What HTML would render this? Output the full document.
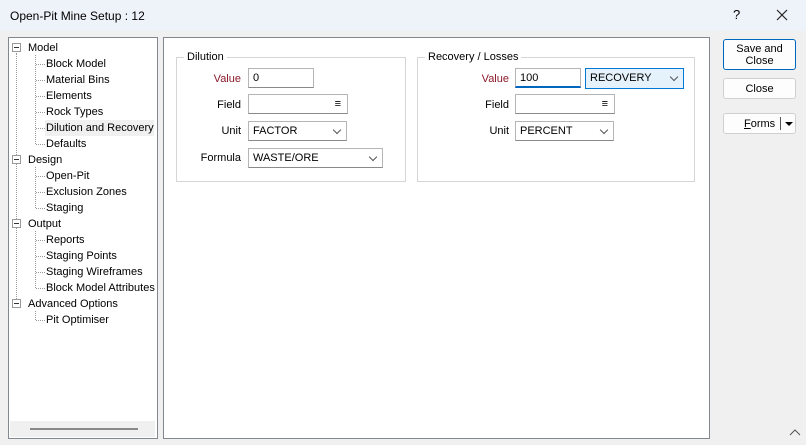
<!DOCTYPE html>
<html><head><style>
*{margin:0;padding:0;box-sizing:border-box}
body{width:806px;height:445px;background:#f0f0f0;font-family:"Liberation Sans",sans-serif;font-size:11px;color:#000;position:relative;overflow:hidden}
.a{position:absolute}
.t{position:absolute;white-space:nowrap;line-height:14px}
.box{position:absolute;background:#fff;border:1px solid #828790}
.inp{position:absolute;background:#fff;border:1px solid #b5b5b5;border-bottom-color:#8a8a8a;padding-left:4px;line-height:19px}
.chev{position:absolute;right:6px;top:5px;width:6px;height:6px;border-right:1px solid #555;border-bottom:1px solid #555;transform:rotate(45deg)}
.lbl{position:absolute;text-align:right;width:80px;line-height:14px}
.grp{position:absolute;border:1px solid #d5d5d5}
.leg{position:absolute;background:#fff;padding:0 3px;line-height:13px}
.btn{position:absolute;background:#fdfdfd;border:1px solid #d0d0d0;border-radius:3px;text-align:center;line-height:12px}
.pm{position:absolute;width:9px;height:9px;border:1px solid #999;background:#fff}
.pm:after{content:"";position:absolute;left:1px;top:3px;width:5px;height:1px;background:#333}
.dv{position:absolute;border-left:1px dotted #999}
.dh{position:absolute;border-top:1px dotted #999;width:9px}
</style></head><body>
<div class="a" style="left:0;top:0;width:806px;height:31px;background:#eef2f9"></div>
<div class="t" style="left:10px;top:9px;font-size:12px">Open-Pit Mine Setup : 12</div>
<div class="t" style="left:733px;top:8px;font-size:13px">?</div>
<svg class="a" style="left:776px;top:9px" width="12" height="12"><path d="M1 1L11 11M11 1L1 11" stroke="#222" stroke-width="1.2"/></svg>

<div class="box" style="left:8px;top:37px;width:150px;height:402px"></div>
<div class="a" style="left:10px;top:421px;width:145px;height:16px;background:#f0f0f0"></div>
<div class="a" style="left:30px;top:428px;width:108px;height:2px;background:#888"></div>

<div class="dv" style="left:16px;top:53px;height:252px"></div>
<div class="dv" style="left:35px;top:55px;height:89px"></div>
<div class="dv" style="left:35px;top:167px;height:41px"></div>
<div class="dv" style="left:35px;top:231px;height:57px"></div>
<div class="dv" style="left:35px;top:311px;height:9px"></div>

<div class="pm" style="left:12px;top:43px"></div><div class="t" style="left:28px;top:41px">Model</div>
<div class="dh" style="left:36px;top:64px"></div><div class="t" style="left:46px;top:57px">Block Model</div>
<div class="dh" style="left:36px;top:80px"></div><div class="t" style="left:46px;top:73px">Material Bins</div>
<div class="dh" style="left:36px;top:96px"></div><div class="t" style="left:46px;top:89px">Elements</div>
<div class="dh" style="left:36px;top:112px"></div><div class="t" style="left:46px;top:105px">Rock Types</div>
<div class="a" style="left:45px;top:120px;width:109px;height:16px;background:#f0f0f0"></div>
<div class="dh" style="left:36px;top:128px"></div><div class="t" style="left:46px;top:121px">Dilution and Recovery</div>
<div class="dh" style="left:36px;top:144px"></div><div class="t" style="left:46px;top:137px">Defaults</div>
<div class="pm" style="left:12px;top:155px"></div><div class="t" style="left:28px;top:153px">Design</div>
<div class="dh" style="left:36px;top:176px"></div><div class="t" style="left:46px;top:169px">Open-Pit</div>
<div class="dh" style="left:36px;top:192px"></div><div class="t" style="left:46px;top:185px">Exclusion Zones</div>
<div class="dh" style="left:36px;top:208px"></div><div class="t" style="left:46px;top:201px">Staging</div>
<div class="pm" style="left:12px;top:219px"></div><div class="t" style="left:28px;top:217px">Output</div>
<div class="dh" style="left:36px;top:240px"></div><div class="t" style="left:46px;top:233px">Reports</div>
<div class="dh" style="left:36px;top:256px"></div><div class="t" style="left:46px;top:249px">Staging Points</div>
<div class="dh" style="left:36px;top:272px"></div><div class="t" style="left:46px;top:265px">Staging Wireframes</div>
<div class="dh" style="left:36px;top:288px"></div><div class="t" style="left:46px;top:281px">Block Model Attributes</div>
<div class="pm" style="left:12px;top:299px"></div><div class="t" style="left:28px;top:297px">Advanced Options</div>
<div class="dh" style="left:36px;top:320px"></div><div class="t" style="left:46px;top:313px">Pit Optimiser</div>

<div class="box" style="left:163px;top:37px;width:547px;height:402px"></div>

<div class="grp" style="left:176px;top:57px;width:230px;height:125px"></div>
<div class="leg" style="left:184px;top:51px">Dilution</div>
<div class="lbl" style="left:161px;top:72px;color:#8b1a2b">Value</div>
<div class="inp" style="left:248px;top:68px;width:66px;height:20px">0</div>
<div class="lbl" style="left:161px;top:98px">Field</div>
<div class="inp" style="left:248px;top:94px;width:100px;height:20px"><span class="a" style="right:6px;top:0">≡</span></div>
<div class="lbl" style="left:161px;top:124px">Unit</div>
<div class="inp" style="left:248px;top:121px;width:99px;height:20px">FACTOR<span class="chev"></span></div>
<div class="lbl" style="left:161px;top:151px">Formula</div>
<div class="inp" style="left:248px;top:148px;width:135px;height:20px">WASTE/ORE<span class="chev"></span></div>

<div class="grp" style="left:417px;top:57px;width:278px;height:125px"></div>
<div class="leg" style="left:425px;top:51px">Recovery / Losses</div>
<div class="lbl" style="left:429px;top:72px;color:#8b1a2b">Value</div>
<div class="inp" style="left:515px;top:68px;width:66px;height:20px;border-bottom:2px solid #0067c0;line-height:18px">100</div>
<div class="inp" style="left:585px;top:68px;width:99px;height:21px;background:#e5f1fb;border-color:#0078d4">RECOVERY<span class="chev"></span></div>
<div class="lbl" style="left:429px;top:98px">Field</div>
<div class="inp" style="left:515px;top:94px;width:100px;height:20px"><span class="a" style="right:6px;top:0">≡</span></div>
<div class="lbl" style="left:429px;top:124px">Unit</div>
<div class="inp" style="left:515px;top:121px;width:99px;height:20px">PERCENT<span class="chev"></span></div>

<div class="btn" style="left:723px;top:39px;width:73px;height:31px;border:1px solid #0067c0;padding-top:3px">Save and<br>Close</div>
<div class="btn" style="left:723px;top:78px;width:73px;height:21px;line-height:20px">Close</div>
<div class="btn" style="left:723px;top:113px;width:73px;height:21px;line-height:20px"><span style="position:absolute;left:20px"><u>F</u>orms</span><span class="a" style="left:56px;top:3px;height:13px;border-left:1px solid #555"></span><span class="a" style="left:61px;top:8px;border-left:4px solid transparent;border-right:4px solid transparent;border-top:4px solid #000"></span></div>
<svg class="a" style="left:789px;top:428px" width="12" height="8"><path d="M1 7L6 2L11 7" stroke="#555" fill="none"/></svg>
</body></html>
